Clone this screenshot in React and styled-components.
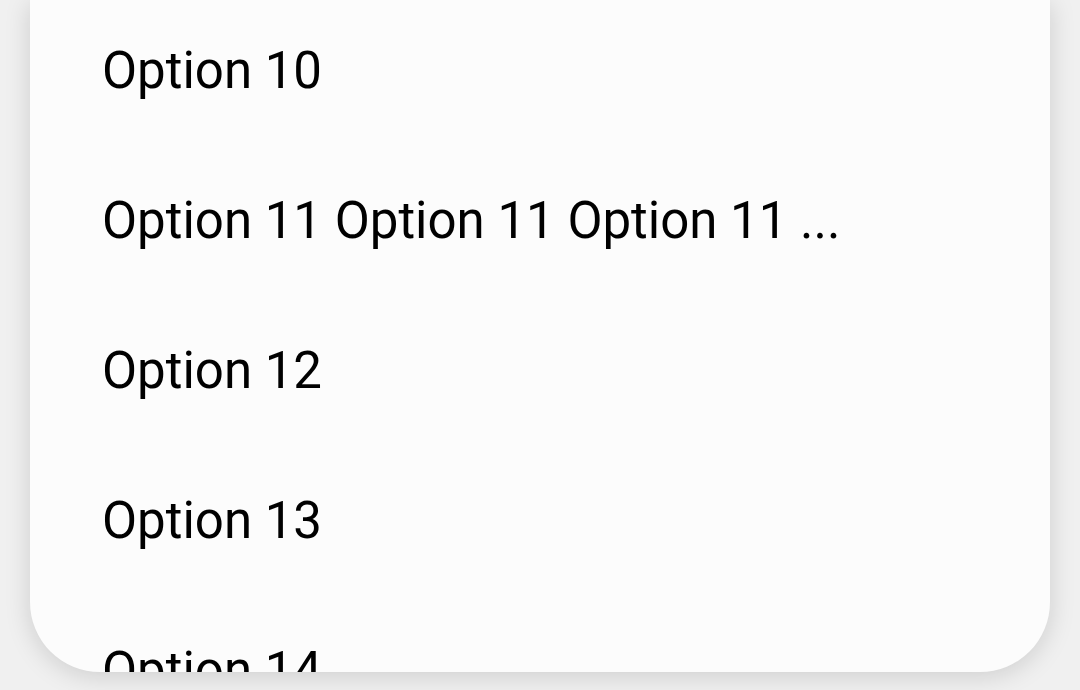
import React from 'react';
import styled, { createGlobalStyle } from 'styled-components';

const GlobalStyle = createGlobalStyle`
  html, body {
    margin: 0;
    padding: 0;
    background: #f0f0f0;
    font-family: Roboto, "Noto Sans", sans-serif;
  }
`;

const options = [
  'Option 10',
  'Option 11 Option 11 Option 11 ...',
  'Option 12',
  'Option 13',
  'Option 14',
];

const App = () => (
  <>
    <GlobalStyle />
    <Screen>
      <Sheet>
        <OptionList>
          {options.map((label) => (
            <OptionRow key={label}>{label}</OptionRow>
          ))}
        </OptionList>
      </Sheet>
    </Screen>
  </>
);

export default App;

const Screen = styled.div`
  width: 1080px;
  height: 690px;
  box-sizing: border-box;
  padding: 0 30px 18px;
  display: flex;
  flex-direction: column;
  overflow: hidden;
  background: #f0f0f0;
`;

const Sheet = styled.div`
  flex: 1;
  background: #fcfcfc;
  border-radius: 0 0 70px 70px;
  box-shadow: 0 4px 26px rgba(0, 0, 0, 0.15);
  overflow: hidden;
`;

const OptionList = styled.ul`
  list-style: none;
  margin: -5px 0 0;
  padding: 0;
  display: flex;
  flex-direction: column;
`;

const OptionRow = styled.li`
  height: 150px;
  flex-shrink: 0;
  display: flex;
  align-items: center;
  padding-left: 72px;
  font-size: 51px;
  color: #000000;
  white-space: nowrap;
`;
